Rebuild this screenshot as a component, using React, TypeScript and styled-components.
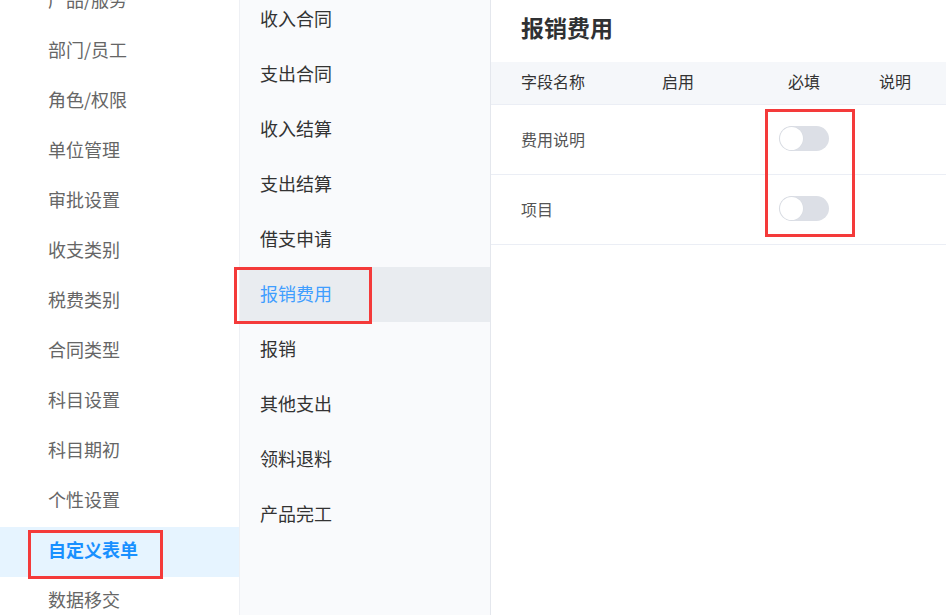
import React from "react";
import styled, { createGlobalStyle } from "styled-components";

const GlobalStyle = createGlobalStyle`
    html, body {
        margin: 0;
        padding: 0;
        background: #fff;
    }
    body {
        font-family: "Noto Sans CJK SC", "Noto Sans", sans-serif;
    }
`;

const settingsMenu = [
    "产品/服务",
    "部门/员工",
    "角色/权限",
    "单位管理",
    "审批设置",
    "收支类别",
    "税费类别",
    "合同类型",
    "科目设置",
    "科目期初",
    "个性设置",
    "自定义表单",
    "数据移交",
];

const formMenu = [
    "收入合同",
    "支出合同",
    "收入结算",
    "支出结算",
    "借支申请",
    "报销费用",
    "报销",
    "其他支出",
    "领料退料",
    "产品完工",
];

const fields = [
    { id: "desc", name: "费用说明", required: false },
    { id: "project", name: "项目", required: false },
];

export default function App() {
    return (
        <React.Fragment>
            <GlobalStyle />
            <Page>
                <SideNav>
                    <SideList>
                        {settingsMenu.map(item => (
                            <SideItem key={item} active={item === "自定义表单"}>
                                {item}
                            </SideItem>
                        ))}
                    </SideList>
                </SideNav>
                <FormNav>
                    <FormList>
                        {formMenu.map(item => (
                            <FormItem key={item} active={item === "报销费用"}>
                                {item}
                            </FormItem>
                        ))}
                    </FormList>
                </FormNav>
                <Content>
                    <Title>报销费用</Title>
                    <HeaderRow>
                        <Cell>字段名称</Cell>
                        <Cell center>启用</Cell>
                        <Cell center>必填</Cell>
                        <Cell pad>说明</Cell>
                    </HeaderRow>
                    {fields.map(field => (
                        <Row key={field.id}>
                            <Cell>{field.name}</Cell>
                            <Cell center />
                            <Cell center>
                                <Switch on={field.required}>
                                    <Knob on={field.required} />
                                </Switch>
                            </Cell>
                            <Cell pad />
                        </Row>
                    ))}
                </Content>

                <Mark style={{ left: 28, top: 530, width: 135, height: 49 }} />
                <Mark style={{ left: 234, top: 267, width: 138, height: 57 }} />
                <Mark style={{ left: 765, top: 109, width: 90, height: 128 }} />
            </Page>
        </React.Fragment>
    );
}

const Page = styled.div`
    position: relative;
    display: flex;
    width: 946px;
    height: 615px;
    overflow: hidden;
    background: #fff;
`;

const SideNav = styled.nav`
    flex: 0 0 240px;
    height: 100%;
    background: #fff;
    border-right: 1px solid #eef0f4;
    box-sizing: border-box;
    overflow: hidden;
`;

const SideList = styled.ul`
    list-style: none;
    margin: -23px 0 0;
    padding: 0;
`;

const SideItem = styled.li<{ active?: boolean }>`
    height: 50px;
    display: flex;
    align-items: center;
    padding-left: 48px;
    padding-bottom: 7px;
    box-sizing: border-box;
    font-size: 18px;
    color: ${props => (props.active ? "#1890ff" : "#666")};
    font-weight: ${props => (props.active ? 700 : 400)};
    background: ${props => (props.active ? "#e6f4ff" : "transparent")};
`;

const FormNav = styled.nav`
    flex: 0 0 251px;
    height: 100%;
    background: #f9fafc;
    border-right: 1px solid #e4e7ed;
    box-sizing: border-box;
    overflow: hidden;
`;

const FormList = styled.ul`
    list-style: none;
    margin: -8px 0 0;
    padding: 0;
`;

const FormItem = styled.li<{ active?: boolean }>`
    height: 55px;
    display: flex;
    align-items: center;
    padding-left: 20px;
    padding-bottom: 3px;
    box-sizing: border-box;
    font-size: 18px;
    color: ${props => (props.active ? "#409eff" : "#333")};
    background: ${props => (props.active ? "#e9ecf0" : "transparent")};
`;

const Content = styled.main`
    flex: 1;
    min-width: 0;
    display: flex;
    flex-direction: column;
`;

const Title = styled.h2`
    margin: 0;
    height: 62px;
    padding-left: 30px;
    padding-bottom: 8px;
    box-sizing: border-box;
    display: flex;
    align-items: center;
    font-size: 23px;
    font-weight: 700;
    color: #303133;
`;

const HeaderRow = styled.div`
    display: grid;
    grid-template-columns: 94px 126px 126px 1fr;
    align-items: center;
    height: 43px;
    padding-left: 30px;
    padding-bottom: 5px;
    box-sizing: border-box;
    background: #f5f7fa;
    border-bottom: 1px solid #ebeef5;
    font-size: 16px;
    color: #333;
`;

const Row = styled.div`
    display: grid;
    grid-template-columns: 94px 126px 126px 1fr;
    align-items: center;
    height: 70px;
    padding-left: 30px;
    padding-bottom: 2px;
    box-sizing: border-box;
    border-bottom: 1px solid #ebeef5;
    font-size: 16px;
    color: #555;
`;

const Cell = styled.div<{ center?: boolean; pad?: boolean }>`
    display: flex;
    align-items: center;
    justify-content: ${props => (props.center ? "center" : "flex-start")};
    padding-left: ${props => (props.pad ? "12px" : "0")};
    white-space: nowrap;
`;

const Switch = styled.span<{ on?: boolean }>`
    position: relative;
    display: inline-block;
    width: 50px;
    height: 25px;
    border-radius: 13px;
    background: ${props => (props.on ? "#409eff" : "#dcdfe6")};
`;

const Knob = styled.span<{ on?: boolean }>`
    position: absolute;
    top: 1px;
    left: ${props => (props.on ? "26px" : "1px")};
    width: 23px;
    height: 23px;
    border-radius: 50%;
    background: #fff;
    box-shadow: 0 0 0 0.5px #d5d9e0;
`;

const Mark = styled.div`
    position: absolute;
    box-sizing: border-box;
    border: 3px solid #f43a3a;
    pointer-events: none;
`;
